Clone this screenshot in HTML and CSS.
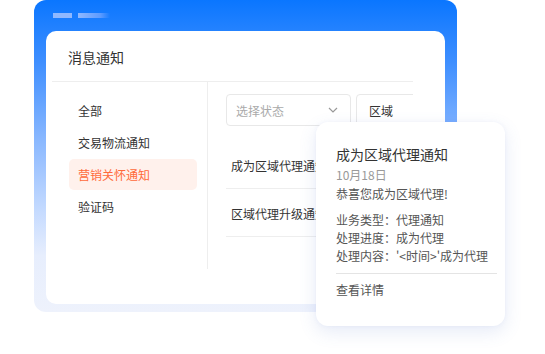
FILE: index.html
```html
<!DOCTYPE html>
<html lang="zh-CN">
<head>
    <meta charset="UTF-8">
    <title>消息通知</title>
    <link rel="stylesheet" href="styles.css">
</head>
<body>
<div class="stage">
    <div class="frame">
        <div class="frame-bars">
            <span class="bar bar-a"></span>
            <span class="bar bar-b"></span>
        </div>
        <div class="panel">
            <div class="panel-title">消息通知</div>
            <div class="panel-body">
                <ul class="side-menu">
                    <li>全部</li>
                    <li>交易物流通知</li>
                    <li class="active">营销关怀通知</li>
                    <li>验证码</li>
                </ul>
                <div class="content">
                    <div class="filters">
                        <div class="select">
                            <span>选择状态</span>
                            <svg width="10" height="6" viewBox="0 0 10 6"><path d="M1 1l4 4 4-4" fill="none" stroke="#999" stroke-width="1.2"/></svg>
                        </div>
                        <div class="select area"><span>区域</span></div>
                    </div>
                    <div class="row">成为区域代理通知</div>
                    <div class="row">区域代理升级通知</div>
                </div>
            </div>
        </div>
    </div>

    <div class="popup">
        <div class="popup-title">成为区域代理通知</div>
        <div class="popup-date">10月18日</div>
        <div class="popup-text">恭喜您成为区域代理!</div>
        <div class="popup-info">
            <p>业务类型：代理通知</p>
            <p>处理进度：成为代理</p>
            <p>处理内容：'&lt;时间&gt;'成为代理</p>
        </div>
        <div class="popup-link">查看详情</div>
    </div>
</div>
</body>
</html>
```

FILE: styles.css
```css
*{
    padding: 0;
    margin: 0;
    box-sizing: border-box;
}
body{
    font-family: "Noto Sans CJK SC", "Noto Sans", sans-serif;
    font-size: 12px;
    color: #333;
    background: #fff;
}
.stage{
    position: relative;
    width: 545px;
    height: 354px;
    padding-left: 34px;
}
.frame{
    width: 423px;
    height: 312px;
    border-radius: 12px;
    padding: 13px 12px 0;
    background: linear-gradient(180deg, #0a76ff 0%, #3f8fff 20%, #8ab8ff 45%, #c6dbff 68%, #e7eefd 82%, #eef2fc 100%);
}
.frame-bars{
    display: flex;
    gap: 6px;
    height: 5px;
    padding-left: 7px;
}
.bar{
    display: block;
    height: 5px;
}
.bar-a{
    width: 19px;
    background: #8fb8ff;
}
.bar-b{
    width: 32px;
    background: linear-gradient(90deg, #8fb8ff, #5d9bff 70%, rgba(93,155,255,0));
}
.panel{
    margin-top: 13px;
    height: 273px;
    background: #fff;
    border-radius: 10px;
}
.panel-title{
    height: 50px;
    line-height: 52px;
    padding-left: 22px;
    font-size: 14px;
    color: #333;
}
.panel-body{
    display: flex;
    margin: 0 32px 0 6px;
    border-top: 1px solid #eeeeee;
    height: 188px;
}
.side-menu{
    list-style: none;
    width: 156px;
    flex-shrink: 0;
    border-right: 1px solid #eeeeee;
    padding: 13px 10px 0 17px;
}
.side-menu li{
    height: 31px;
    line-height: 31px;
    margin-bottom: 1px;
    padding-left: 9px;
    border-radius: 5px;
    color: #333;
}
.side-menu li.active{
    background: #fff1ec;
    color: #ff6a3a;
}
.content{
    flex: 1;
    overflow: hidden;
    padding: 12px 0 0 18px;
}
.filters{
    display: flex;
    gap: 5px;
}
.select{
    display: flex;
    align-items: center;
    justify-content: space-between;
    flex-shrink: 0;
    width: 125px;
    height: 32px;
    border: 1px solid #e8e8e8;
    border-radius: 4px;
    padding: 0 12px 0 9px;
    color: #aaa;
}
.select.area{
    width: 125px;
    color: #333;
    padding-left: 12px;
}
.row{
    width: 260px;
    height: 48px;
    line-height: 50px;
    padding-left: 5px;
    border-bottom: 1px solid #eeeeee;
    white-space: nowrap;
}
.filters + .row{
    margin-top: 15px;
}
.popup{
    position: absolute;
    left: 316px;
    top: 122px;
    width: 189px;
    height: 204px;
    background: #fff;
    border-radius: 12px;
    box-shadow: 0 6px 18px rgba(80, 110, 200, 0.14), 0 0 4px rgba(80, 110, 200, 0.06);
    padding: 22px 8px 0 20px;
    color: #555;
}
.popup-title{
    font-size: 14px;
    line-height: 20px;
    color: #333;
}
.popup-date{
    margin-top: 2px;
    line-height: 18px;
    color: #999;
}
.popup-text{
    line-height: 19px;
}
.popup-info{
    margin-top: 8px;
    line-height: 18px;
    padding-bottom: 8px;
    border-bottom: 1px solid #e4e4e4;
}
.popup-link{
    margin-top: 7px;
    line-height: 18px;
}
```
